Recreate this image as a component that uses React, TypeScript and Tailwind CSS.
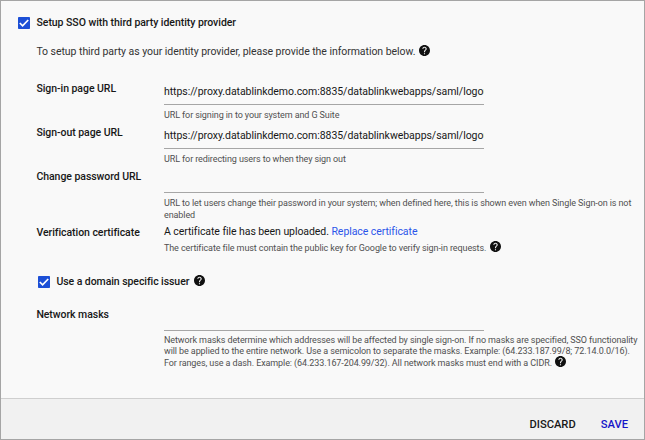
import type { ReactNode } from 'react';

function Help({ className = '' }: { className?: string }) {
  return (
    <svg viewBox="2 2 20 20" className={`h-[11px] w-[11px] shrink-0 ${className}`} fill="#111">
      <path d="M12 2C6.48 2 2 6.48 2 12s4.48 10 10 10 10-4.48 10-10S17.52 2 12 2zm1 17h-2v-2h2v2zm2.07-7.75l-.9.92C13.45 12.9 13 13.5 13 15h-2v-.5c0-1.1.45-2.1 1.17-2.83l1.24-1.26c.37-.36.59-.86.59-1.41 0-1.1-.9-2-2-2s-2 .9-2 2H8c0-2.21 1.79-4 4-4s4 1.79 4 4c0 .88-.36 1.68-.93 2.25z" />
    </svg>
  );
}

function Checkbox() {
  return (
    <svg viewBox="0 0 12 12" className="h-3 w-3 shrink-0" role="img" aria-label="checked">
      <rect width="12" height="12" rx="0.8" fill="#1c4fd6" />
      <path d="M1.8 6 4.6 8.8 10.2 3" fill="none" stroke="#fff" strokeWidth="1.7" />
    </svg>
  );
}

function Row({ label, className, children }: { label: string; className: string; children: ReactNode }) {
  return (
    <div className={`flex ${className}`}>
      <div className="mt-px h-4 w-[127.6px] shrink-0 leading-4 font-medium">{label}</div>
      <div className="min-w-0 flex-1">{children}</div>
    </div>
  );
}

function Field({ value = '' }: { value?: string }) {
  return (
    <div className="h-[25px] w-80 overflow-hidden border-b border-[#a6a6a6] pt-1 leading-4 tracking-[-0.045px] whitespace-nowrap">
      {value}
    </div>
  );
}

const hint = 'whitespace-nowrap text-[9px] tracking-[-0.095px] text-[#505050]';
const url = 'https://proxy.datablinkdemo.com:8835/datablinkwebapps/saml/logout';

export default function App() {
  return (
    <div className="flex h-[440px] w-[645px] flex-col border border-[#a5a5a5] bg-[#f9f9f9] font-['Roboto',sans-serif] text-[#171717]">
      <main className="h-[397px] pl-[35.4px] text-[10.5px] tracking-[-0.05px]">
        <div className="mt-[14px] -ml-[18.4px] flex h-4 items-center gap-[6.5px] font-medium">
          <Checkbox />
          <span>Setup SSO with third party identity provider</span>
        </div>
        <div className="mt-[13px] flex h-4 items-center">
          <span className="whitespace-nowrap text-[#333]">
            To setup third party as your identity provider, please provide the information below.
          </span>
          <Help className="-mt-[3px] ml-1" />
        </div>
        <Row label="Sign-in page URL" className="mt-5 h-[44px]">
          <Field value={url} />
          <div className={`${hint} mt-1 leading-3`}>URL for signing in to your system and G Suite</div>
        </Row>
        <Row label="Sign-out page URL" className="h-[44px]">
          <Field value={url} />
          <div className={`${hint} mt-1 leading-3`}>URL for redirecting users to when they sign out</div>
        </Row>
        <Row label="Change password URL" className="h-[56px]">
          <Field />
          <div className={`${hint} mt-1 leading-3`}>
            <div>URL to let users change their password in your system; when defined here, this is shown even when Single Sign-on is not</div>
            <div>enabled</div>
          </div>
        </Row>
        <Row label="Verification certificate" className="h-[50px]">
          <div className="h-4 leading-4 tracking-[-0.065px] whitespace-nowrap">
            A certificate file has been uploaded. <a className="text-[#2b55ea]">Replace certificate</a>
          </div>
          <div className={`${hint} mt-[2px] flex h-3 items-center leading-3`}>
            <span>The certificate file must contain the public key for Google to verify sign-in requests.</span>
            <Help className="-mt-[3px] ml-1" />
          </div>
        </Row>
        <div className="ml-[1.6px] flex h-4 items-center font-medium">
          <Checkbox />
          <span className="ml-[6.5px] tracking-[-0.07px]">Use a domain specific issuer</span>
          <Help className="-mt-1 ml-[5px]" />
        </div>
        <Row label="Network masks" className="mt-4">
          <Field />
          <div className={`${hint} mt-1 leading-[11px]`}>
            <div>Network masks determine which addresses will be affected by single sign-on. If no masks are specified, SSO functionality</div>
            <div>will be applied to the entire network. Use a semicolon to separate the masks. Example: (64.233.187.99/8; 72.14.0.0/16).</div>
            <div className="flex h-3 items-center">
              <span>For ranges, use a dash. Example: (64.233.167-204.99/32). All network masks must end with a CIDR.</span>
              <Help className="-mt-[3px] ml-[3px]" />
            </div>
          </div>
        </Row>
      </main>
      <footer className="flex flex-1 items-center justify-end gap-[25px] border-t border-[#cfcfcf] bg-[#f1f1f1] pt-[13px] pr-4 text-[11.2px] font-medium">
        <button>DISCARD</button>
        <button className="text-[#1515c8]">SAVE</button>
      </footer>
    </div>
  );
}
